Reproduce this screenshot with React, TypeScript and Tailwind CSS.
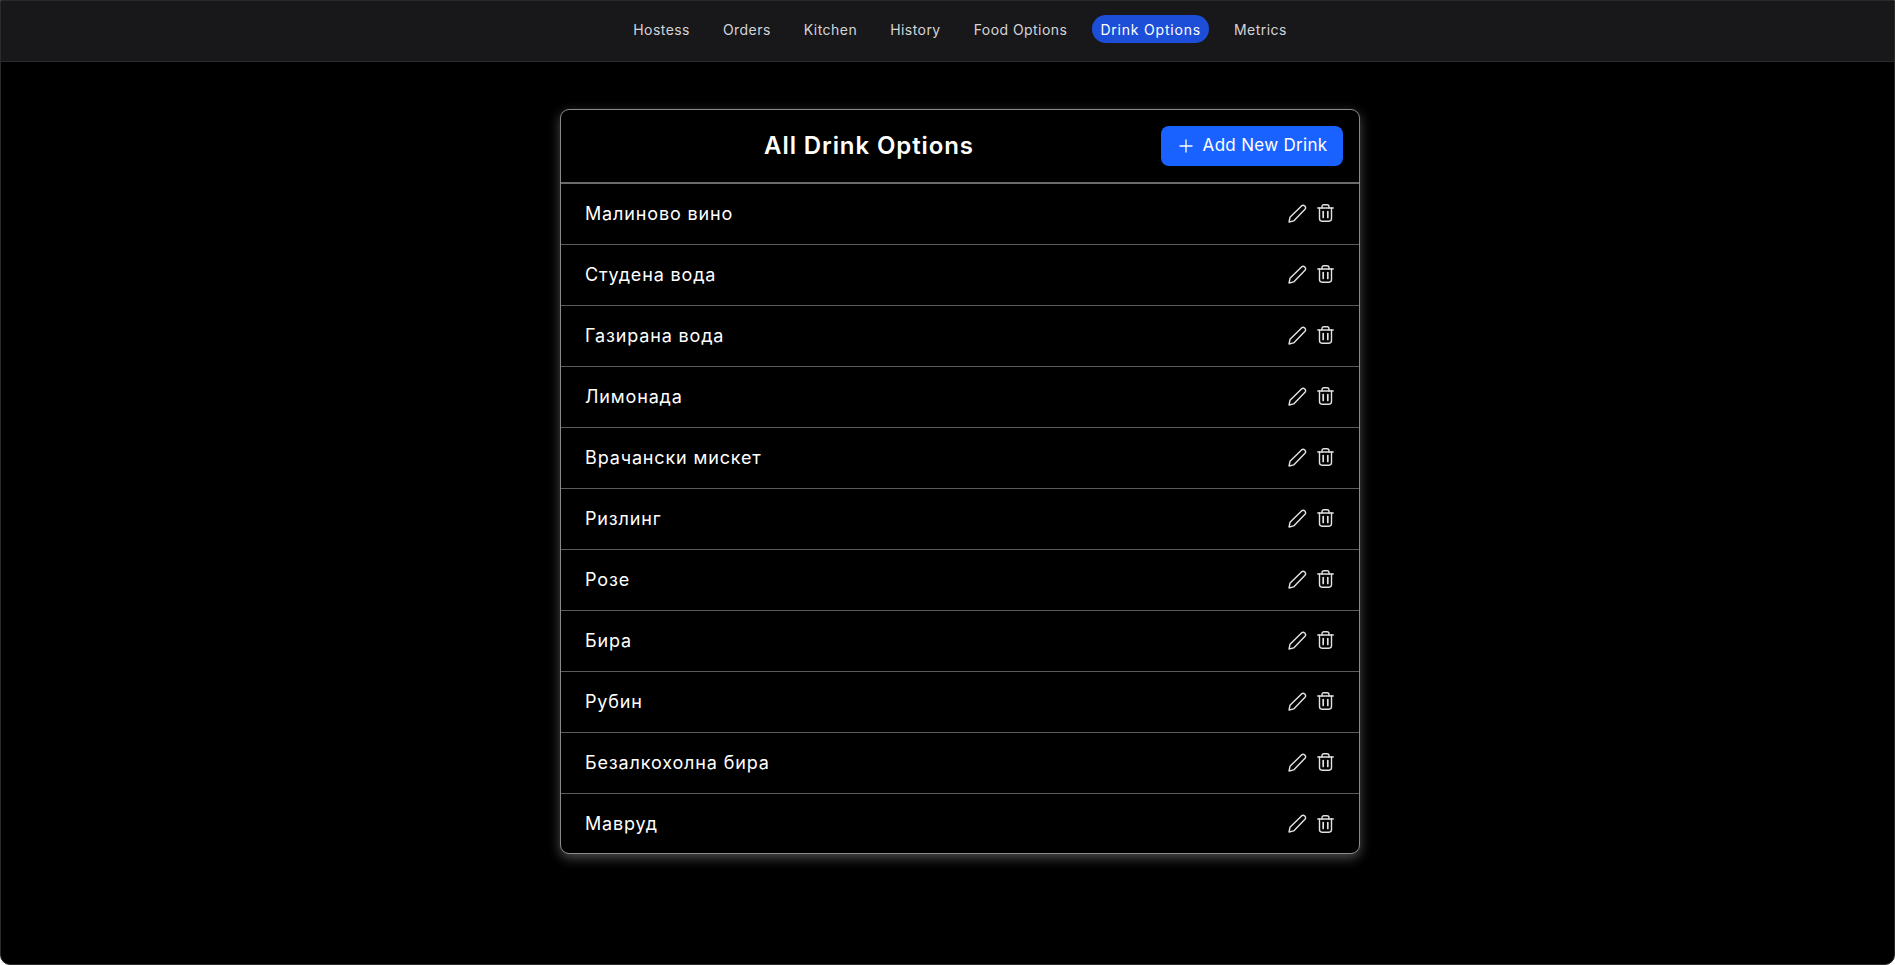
const NAV = ["Hostess", "Orders", "Kitchen", "History", "Food Options", "Drink Options", "Metrics"];
const DRINKS = ["Малиново вино", "Студена вода", "Газирана вода", "Лимонада", "Врачански мискет", "Ризлинг", "Розе", "Бира", "Рубин", "Безалкохолна бира", "Мавруд"];

function Pencil() {
  return (
    <svg width="19" height="19" viewBox="0 0 18 18" fill="none" stroke="#e2e2e2" strokeWidth="1.35" strokeLinejoin="round" strokeLinecap="round">
      <path d="M1 17 L1.9 12.6 L12.8 1.8 Q14.4 0.5 15.9 1.9 Q17.4 3.5 16.1 5 L5.4 16 Z" />
    </svg>
  );
}

function Trash() {
  return (
    <svg width="17" height="18" viewBox="0 0 17 18" fill="none" stroke="#e2e2e2" strokeWidth="1.4" strokeLinejoin="round" strokeLinecap="round">
      <path d="M0.8 4 H16.2" />
      <path d="M5 4 V2.8 Q5 0.8 7 0.8 H10 Q12 0.8 12 2.8 V4" />
      <path d="M2.5 4 V14.6 Q2.5 17.2 5 17.2 H12 Q14.5 17.2 14.5 14.6 V4" />
      <path d="M6.2 7.5 V13.5" strokeWidth="1.7" />
      <path d="M10.8 7.5 V13.5" strokeWidth="1.7" />
    </svg>
  );
}

export default function App() {
  return (
    <div className="min-h-[965px] bg-black text-white border border-[#2a2a2a] rounded-bl-[10px] rounded-br-[10px] font-['Inter','Noto_Sans',sans-serif]">
      <nav className="h-[61px] pb-[4px] pl-[25px] bg-[#18181b] border-b border-[#2a2a2c] flex items-center justify-center gap-[17px]">
        {NAV.map((n) => (
          <a key={n} className={`px-2 h-7 flex items-center rounded-full text-[14px] ${n === "Drink Options" ? "bg-[#1d4ed8] text-white tracking-[0.8px]" : "text-[#d4d4d8] tracking-[0.45px]"}`}>{n}</a>
        ))}
      </nav>
      <div className="flex justify-center pt-[47px] pl-[25px]">
        <div className="w-[800px] border border-[#8a8a8a] rounded-[9px] bg-black shadow-[0_4px_12px_rgba(255,255,255,0.3)]">
          <div className="h-[74px] px-[16px] flex items-center justify-between border-b-2 border-[#6b6b6b]">
            <h1 className="flex-1 text-center text-[24px] font-semibold tracking-[0.9px]">All Drink Options</h1>
            <button className="h-10 w-[182px] pl-[2px] bg-[#1a62ff] rounded-[8px] flex items-center justify-center gap-[10px] text-[17px] tracking-[0.3px]">
              <svg width="14" height="14" viewBox="0 0 14 14" stroke="#fff" strokeWidth="1.3" strokeLinecap="round"><path d="M7 1 V13 M1 7 H13" /></svg>
              Add New Drink
            </button>
          </div>
          {DRINKS.map((d, i) => (
            <div key={d} className={`pl-[24px] pr-[25px] flex items-center justify-between ${i < DRINKS.length - 1 ? "h-[61px] pb-[2px] border-b border-[#5c5c5c]" : "h-[59px]"}`}>
              <span className="text-[18px] tracking-[0.85px]">{d}</span>
              <span className="flex items-center gap-[10px]"><Pencil /><Trash /></span>
            </div>
          ))}
        </div>
      </div>
    </div>
  );
}
